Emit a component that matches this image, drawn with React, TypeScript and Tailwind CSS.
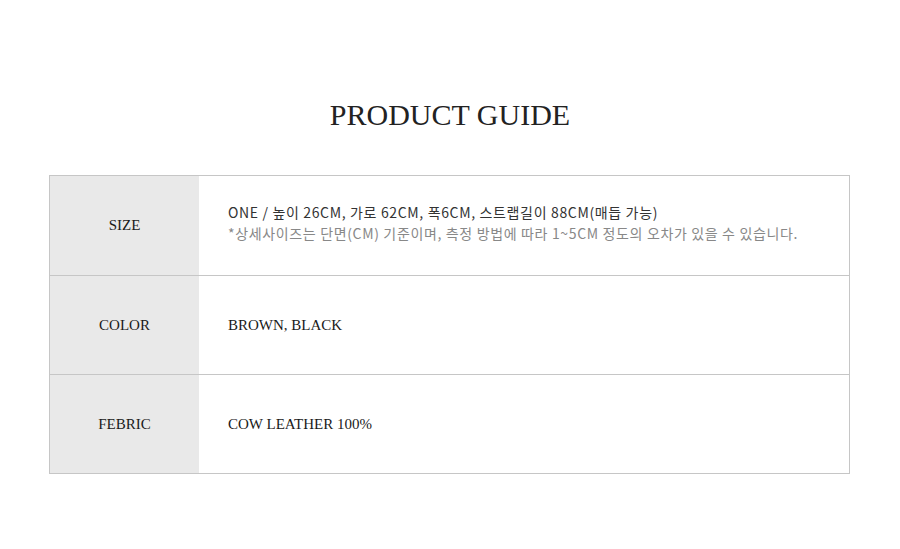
export default function App() {
  const rows = [
    { label: 'SIZE' },
    { label: 'COLOR', value: 'BROWN, BLACK' },
    { label: 'FEBRIC', value: 'COW LEATHER 100%' },
  ]

  return (
    <div className="bg-white w-[900px] h-[549px] pt-[96px]">
      {/* Title */}
      <h1 className="text-center text-[30px] leading-[38px] text-[#222] font-['Liberation_Serif',serif]">
        PRODUCT GUIDE
      </h1>

      {/* Guide table */}
      <div className="mt-[41px] ml-[49px] w-[801px] border border-[#c6c6c6]">
        {rows.map((row, i) => (
          <div
            key={row.label}
            className={`flex h-[99px] ${i > 0 ? 'border-t border-[#c6c6c6]' : ''}`}
          >
            <div className="w-[149px] shrink-0 bg-[#e9e9e9] flex items-center justify-center text-[15px] text-[#1a1a1a] font-['Liberation_Serif',serif]">
              {row.label}
            </div>
            <div className="flex-1 flex flex-col justify-center pl-[29px]">
              {row.value ? (
                <span className="text-[15px] text-[#1a1a1a] font-['Liberation_Serif',serif]">{row.value}</span>
              ) : (
                <div className="text-[14px] leading-[21px] tracking-[0.65px] font-['Noto_Sans_CJK_KR','Noto_Sans',sans-serif] -mt-[5px]">
                  <p className="text-[#333]">ONE / 높이 26CM, 가로 62CM, 폭6CM, 스트랩길이 88CM(매듭 가능)</p>
                  <p className="text-[#888]">*상세사이즈는 단면(CM) 기준이며, 측정 방법에 따라 1~5CM 정도의 오차가 있을 수 있습니다.</p>
                </div>
              )}
            </div>
          </div>
        ))}
      </div>
    </div>
  )
}
